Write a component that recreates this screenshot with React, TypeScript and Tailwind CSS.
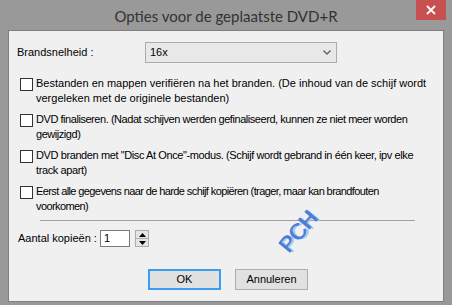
import React from 'react';

const options = [
  {
    lines: [
      'Bestanden en mappen verifiëren na het branden. (De inhoud van de schijf wordt',
      'vergeleken met de originele bestanden)',
    ],
    tracking: 'tracking-[0px]',
  },
  {
    lines: [
      'DVD finaliseren. (Nadat schijven werden gefinaliseerd, kunnen ze niet meer worden',
      'gewijzigd)',
    ],
    tracking: 'tracking-[-0.45px]',
  },
  {
    lines: [
      'DVD branden met "Disc At Once"-modus. (Schijf wordt gebrand in één keer, ipv elke',
      'track apart)',
    ],
    tracking: 'tracking-[-0.4px]',
  },
  {
    lines: [
      'Eerst alle gegevens naar de harde schijf kopiëren (trager, maar kan brandfouten',
      'voorkomen)',
    ],
    tracking: 'tracking-[-0.6px]',
  },
];

function Checkbox() {
  return <div className="mt-[2px] h-[13px] w-[13px] shrink-0 border border-[#333333] bg-white" />;
}

function OptionRow({ lines, tracking }: { lines: string[]; tracking: string }) {
  return (
    <div className="flex pl-[11px]">
      <Checkbox />
      <div className={`ml-[3px] whitespace-nowrap leading-[15px] ${tracking}`}>
        {lines[0]}
        <br />
        {lines[1]}
      </div>
    </div>
  );
}

export default function App() {
  return (
    <div
      className="relative flex h-[305px] w-[452px] flex-col overflow-hidden bg-[#999999] text-[11px] text-black"
      style={{ fontFamily: '"Liberation Sans", Arial, sans-serif' }}
    >
      {/* title bar */}
      <div className="flex h-[30px] shrink-0 items-start">
        <div
          className="flex-1 pl-[36px] pt-[5px] text-center text-[15px] text-[#333333]"
          style={{ fontFamily: 'Lato, "Noto Sans", sans-serif' }}
        >
          Opties voor de geplaatste DVD+R
        </div>
        <div className="mr-[6px] flex h-[20px] w-[30px] items-center justify-center bg-[#c75050]">
          <svg width="10" height="10" viewBox="0 0 10 10">
            <path d="M1 1 L9 9 M9 1 L1 9" stroke="white" strokeWidth="1.8" />
          </svg>
        </div>
      </div>

      {/* client area */}
      <div className="relative mx-[8px] h-[272px] border border-[#7f7f7f] bg-[#f0f0f0]">
        {/* speed row */}
        <div className="mt-[11px] flex h-[21px] items-center pl-[8px]">
          <div className="w-[128px]">Brandsnelheid :</div>
          <div className="flex h-[21px] w-[192px] items-center justify-between border border-[#acacac] bg-[#e8e8e8] pl-[4px] pr-[5px]">
            <span>16x</span>
            <svg width="8" height="5" viewBox="0 0 8 5">
              <path d="M0.5 0.5 L4 4 L7.5 0.5" fill="none" stroke="#606060" strokeWidth="1.3" />
            </svg>
          </div>
        </div>

        {/* options */}
        <div className="mt-[13px] flex flex-col gap-[6px]">
          {options.map((o, i) => (
            <OptionRow key={i} lines={o.lines} tracking={o.tracking} />
          ))}
        </div>

        {/* separator */}
        <div className="ml-[31px] mt-[6px] w-[375px] border-t border-[#a0a0a0]" />

        {/* copies */}
        <div className="mt-[9px] flex h-[17px] items-center pl-[9px]">
          <div className="w-[82px]">Aantal kopieën :</div>
          <div className="flex h-[17px] w-[30px] items-center border border-[#7a7a7a] bg-white pl-[3px]">1</div>
          <div className="ml-[5px] flex h-[17px] w-[14px] flex-col border border-[#adadad] bg-[#e5e5e5]">
            <div className="flex flex-1 items-center justify-center border-b border-[#adadad]">
              <svg width="7" height="4" viewBox="0 0 7 4">
                <path d="M0 4 L3.5 0 L7 4 Z" fill="#000" />
              </svg>
            </div>
            <div className="flex flex-1 items-center justify-center">
              <svg width="7" height="4" viewBox="0 0 7 4">
                <path d="M0 0 L3.5 4 L7 0 Z" fill="#000" />
              </svg>
            </div>
          </div>
        </div>

        {/* buttons */}
        <div className="mt-[22px] flex gap-[14px] pl-[139px]">
          <div className="flex h-[21px] w-[73px] items-center justify-center border-2 border-[#3c9cf0] bg-[#e1e1e1]">
            OK
          </div>
          <div className="flex h-[21px] w-[73px] items-center justify-center border border-[#adadad] bg-[#e1e1e1]">
            Annuleren
          </div>
        </div>

        {/* watermark */}
        <div
          className="absolute left-[266px] top-[190px] -rotate-[50deg] text-[22px] leading-none text-[#4a7fd8] [text-shadow:1px_0_0_#4a7fd8,2px_2px_0_#a9c3ef]"
          style={{ fontFamily: '"Liberation Sans", Arial, sans-serif' }}
        >
          PCH
        </div>
      </div>
    </div>
  );
}
